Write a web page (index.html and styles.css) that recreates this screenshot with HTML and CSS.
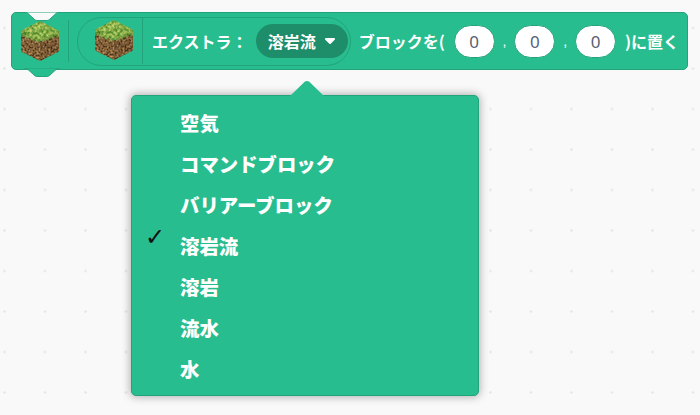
FILE: index.html
```html
<!DOCTYPE html>
<html lang="ja">
<head>
<meta charset="utf-8">
<title>Block</title>
<link rel="stylesheet" href="styles.css">
</head>
<body>
<svg class="defs" width="0" height="0" aria-hidden="true">
  <defs>
    <filter id="dirt" x="0" y="0" width="100%" height="100%" color-interpolation-filters="sRGB">
      <feTurbulence type="fractalNoise" baseFrequency="0.5" numOctaves="2" seed="4" result="n"/>
      <feColorMatrix in="n" type="matrix" values="1 0 0 0 0  0.8 0 0 0 -0.03  0.5 0 0 0 -0.03  0 0 0 0 1"/>
      <feGaussianBlur stdDeviation="0.45"/>
    </filter>
    <filter id="grass" x="0" y="0" width="100%" height="100%" color-interpolation-filters="sRGB">
      <feTurbulence type="fractalNoise" baseFrequency="0.35" numOctaves="2" seed="9" result="n"/>
      <feColorMatrix in="n" type="matrix" values="0.9 0 0 0 0.08  0.6 0 0 0 0.38  0.5 0 0 0 0.04  0 0 0 0 1"/>
      <feGaussianBlur stdDeviation="0.5"/>
    </filter>
    <clipPath id="cube-dirt"><path d="M1 10 19 20 37 10Q38 10 38 11V29Q38 30 37 31L20 39.5Q19 40 18 39.5L1 31Q0 30 0 29V11Q0 10 1 10Z"/></clipPath>
    <clipPath id="cube-top"><path d="M18 .5Q19 0 20 .5L37 9Q38 10 38 11V15L36 17 35 14 32 18 30 16 27 20 25 18 22 21 19 19 16 22 14 18 11 20 9 17 6 18 4 15 2 16 0 13V11Q0 10 1 9Z"/></clipPath>
    <symbol id="cube" viewBox="0 0 38 40">
      <g clip-path="url(#cube-dirt)">
        <rect width="38" height="40" filter="url(#dirt)"/>
        <path d="M19 20 38 10V30L19 40Z" fill="#2a180c" opacity=".1"/>
      </g>
      <g clip-path="url(#cube-top)">
        <rect width="38" height="24" filter="url(#grass)"/>
        <path d="M0 10 19 20 38 10V24H0Z" fill="#1f4a12" opacity=".22"/>
      </g>
    </symbol>
  </defs>
</svg>
<main class="workspace">
  <div class="block">
    <svg class="notch" viewBox="0 0 36 9" width="36" height="9"><path d="M0 0C2 0 3 .5 4 1.5L10 7C11 8 12 8.5 14 8.5H22C24 8.5 25 8 26 7L32 1.5C33 .5 34 0 36 0Z"/></svg>
    <svg class="bump" viewBox="0 0 36 9" width="36" height="9"><path d="M0 0C2 0 3 .5 4 1.5L10 7C11 8 12 8.5 14 8.5H22C24 8.5 25 8 26 7L32 1.5C33 .5 34 0 36 0Z"/></svg>
    <svg class="cube"><use href="#cube"/></svg>
    <span class="divider"></span>
    <div class="capsule">
      <svg class="cube"><use href="#cube"/></svg>
      <span class="divider inner"></span>
      <span class="label">エクストラ：</span>
      <div class="dropdown">
        <span>溶岩流</span>
        <svg class="arrow" viewBox="0 0 12 8" width="12" height="8"><path d="M2 2h8L6 6Z" fill="#fff" stroke="#fff" stroke-width="2" stroke-linejoin="round"/></svg>
      </div>
    </div>
    <span class="label after">ブロックを(</span>
    <span class="num">0</span>
    <span class="comma">,</span>
    <span class="num">0</span>
    <span class="comma">,</span>
    <span class="num">0</span>
    <span class="label tail">)に置く</span>
  </div>
  <div class="menu">
    <span class="caret"></span>
    <div class="item">空気</div>
    <div class="item">コマンドブロック</div>
    <div class="item">バリアーブロック</div>
    <div class="item checked"><span class="tick">✓</span>溶岩流</div>
    <div class="item">溶岩</div>
    <div class="item">流水</div>
    <div class="item">水</div>
  </div>
</main>
</body>
</html>
```
FILE: styles.css
```css
* { box-sizing: border-box; }
html, body { margin: 0; height: 100%; }
body { background: #f9f9f9; overflow: hidden; font-family: "Noto Sans CJK JP", "Noto Sans", sans-serif; }
.defs { position: absolute; }
.workspace {
  position: relative;
  width: 700px;
  height: 415px;
  padding: 12px 0 0 11px;
  background-color: #f9f9f9;
  background-image: radial-gradient(circle at center, #e8e8e8 0, #e8e8e8 1px, transparent 1.5px);
  background-size: 40.5px 40.5px;
  background-position: -15.75px 7.75px;
}
.block {
  position: relative;
  display: flex;
  align-items: center;
  width: 677px;
  height: 58px;
  padding: 0 8px 0 9px;
  background: #28bd8e;
  border: 1px solid #22a37b;
  border-radius: 5px;
  color: #fff;
}
.notch, .bump { position: absolute; left: 12px; }
.notch { top: -1px; }
.notch path { fill: #f9f9f9; stroke: #22a37b; stroke-width: 1; }
.bump { top: 100%; margin-top: -1px; }
.bump path { fill: #28bd8e; stroke: #22a37b; stroke-width: 1; }
.cube { width: 38px; height: 40px; flex: none; }
.divider { width: 1px; height: 42px; margin: 0 8px 0 9px; background: #22a37b; flex: none; }
.divider.inner { height: 46px; margin: 0 9px 0 9px; }
.capsule {
  display: flex;
  align-items: center;
  height: 49px;
  width: 275px;
  padding: 0 2px 0 17px;
  border: 1px solid #22a37b;
  border-radius: 25px;
}
.capsule .cube { margin-top: -3px; }
.label { font-size: 16px; font-weight: 700; white-space: nowrap; line-height: 20px; }
.capsule .label { flex: none; }
.dropdown {
  display: flex;
  align-items: center;
  gap: 8px;
  height: 34px;
  margin-left: auto;
  padding: 0 12px;
  border-radius: 17px;
  background: #1e8d6a;
  font-size: 16px;
  font-weight: 700;
}
.after { margin-left: 8px; }
.num {
  display: flex;
  align-items: center;
  justify-content: center;
  width: 41px;
  height: 33px;
  margin-left: 0;
  background: #fff;
  border: 1px solid #22a37b;
  border-radius: 17px;
  color: #575e75;
  font: 17px "Noto Sans", sans-serif;
}
.after + .num { margin-left: 9px; }
.comma { width: 20px; text-align: center; font-size: 14px; font-family: "Liberation Sans", sans-serif; }
.tail { margin-left: 9px; }
.menu {
  position: absolute;
  left: 131px;
  top: 95px;
  width: 348px;
  height: 301px;
  padding: 6px 0 0 48px;
  background: #28bd8e;
  border: 1px solid #22a37b;
  border-radius: 5px;
  box-shadow: 0 0 8px 1px rgba(0, 0, 0, .3);
  color: #fff;
}
.caret {
  position: absolute;
  left: 158px;
  top: -15px;
  width: 34px;
  height: 15px;
  background: #28bd8e;
  clip-path: polygon(0 100%, 44% 3%, 50% 0, 56% 3%, 100% 100%);
}
.item {
  position: relative;
  height: 41px;
  line-height: 41px;
  font-size: 19.4px;
  font-weight: 900;
  white-space: nowrap;
}
.tick {
  position: absolute;
  left: -35px;
  top: -2px;
  color: #111;
  font: 700 24px "DejaVu Sans", sans-serif;
}
```
